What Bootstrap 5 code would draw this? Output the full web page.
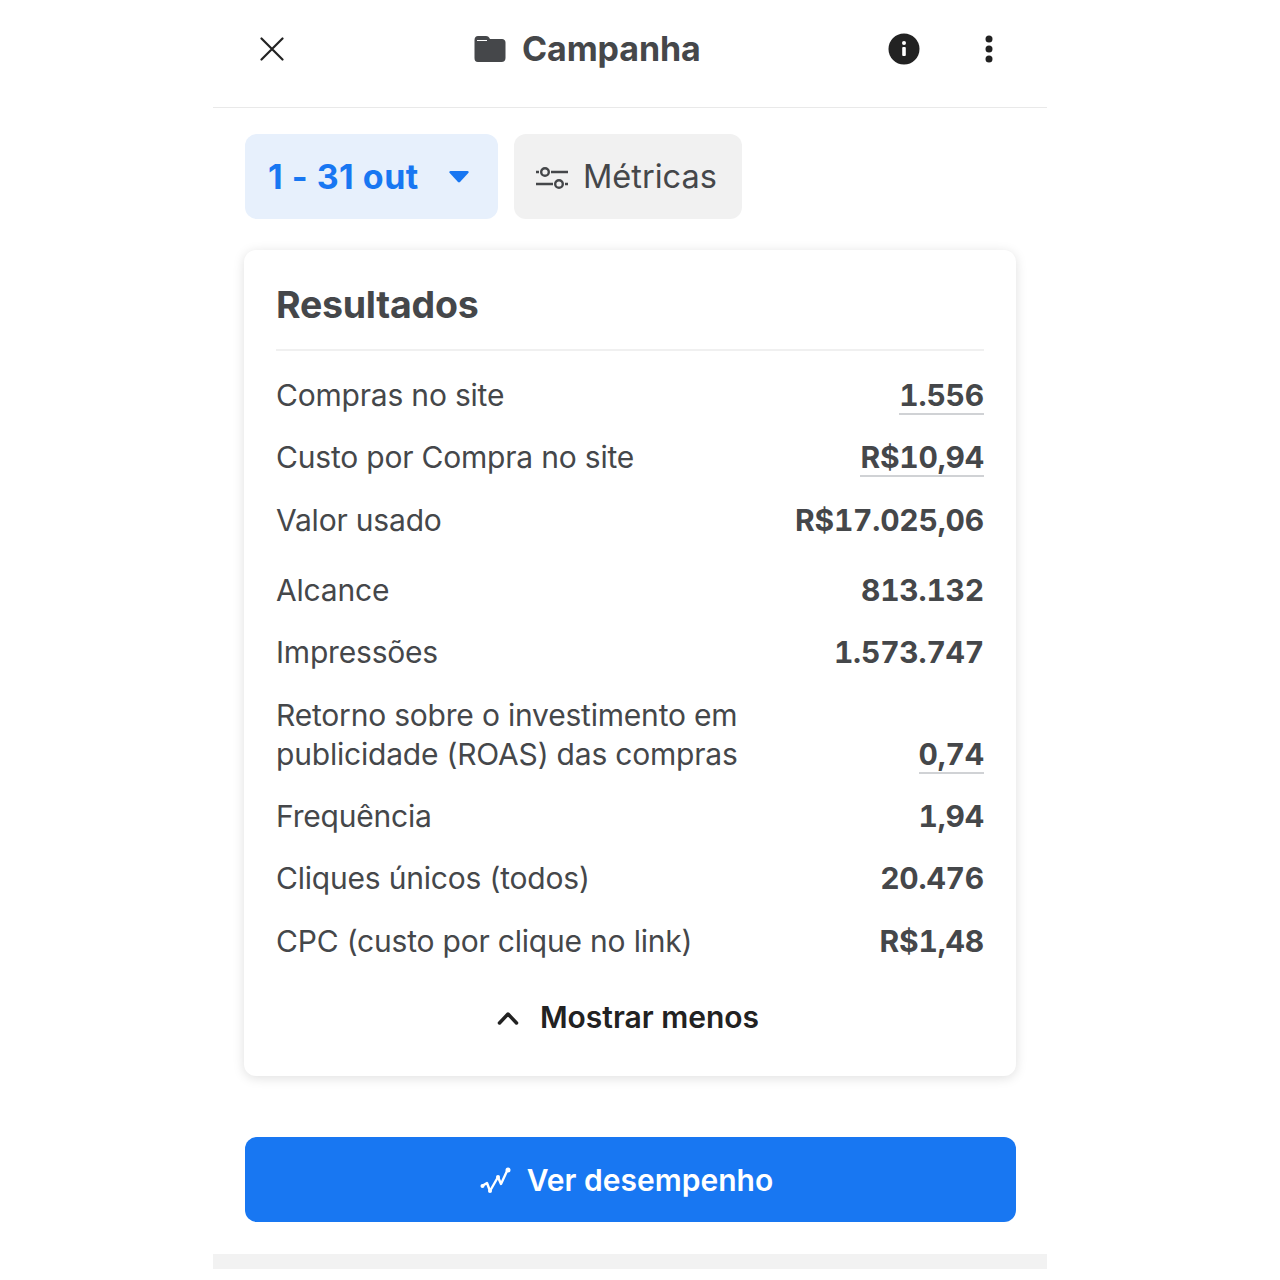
<!DOCTYPE html>
<html lang="pt-BR">
<head>
    <meta charset="UTF-8">
    <meta name="viewport" content="width=device-width, initial-scale=1.0">
    <title>Campanha</title>
    <link rel="stylesheet" href="https://cdn.jsdelivr.net/npm/bootstrap@5.3.2/dist/css/bootstrap.min.css">
    <style>
        body { background: #fff; font-family: Inter, "Liberation Sans", sans-serif; color: #45474a; }
        .phone-view { width: 834px; margin-left: 213px; }
        .top-bar { height: 108px; border-bottom: 1px solid #e9e9e9; padding: 0 53px 10px 47px; color: #222; }
        .top-title { font-size: 34px; font-weight: 700; color: #45474a; gap: 16px; letter-spacing: -.1px; }
        .close-box { width: 214px; }
        .top-actions { width: 106px; margin-left: auto; }
        .filter-row { padding: 26px 32px 0; gap: 16px; }
        .filter-btn { height: 85px; border-radius: 12px; border: 0; font-size: 32px; display: flex; align-items: center; }
        .filter-date { width: 253px; background: #e7f0fc; color: #1877f2; font-size: 34px; font-weight: 700; padding: 0 29px 0 23px; justify-content: space-between; letter-spacing: .5px; }
        .filter-metric { width: 228px; background: #f1f1f1; color: #45474a; padding: 2px 23px 0 22px; gap: 15px; font-size: 32.500px; }
        .result-card { margin: 31px 31px 0; border: 0; border-radius: 12px; height: 826px; padding: 0 32px; box-shadow: 0 2px 12px rgba(0,0,0,.13); }
        .result-title { font-size: 37.500px; font-weight: 700; color: #45474a; height: 101px; line-height: 110px; border-bottom: 2px solid #f0f0f0; letter-spacing: -.25px; }
        .metric-list { padding-top: 13px; }
        .metric-row { height: 62.500px; font-size: 30px; align-items: center; letter-spacing: -.2px; }
        .metric-row.gap-top { margin-top: 7.500px; }
        .metric-row.tall { height: 100.800px; align-items: flex-end; padding-bottom: 11px; line-height: 39px; }
        .metric-num { font-weight: 700; white-space: nowrap; font-variant-numeric: tabular-nums; letter-spacing: -.2px; }
        .metric-link { border-bottom: 2px solid #d0d2d5; line-height: 35px; padding-top: 2px; }
        .show-less { margin-top: 23px; padding-right: 4px; font-size: 30px; font-weight: 600; color: #222; gap: 21px; }
        .perf-btn { margin: 61px 32px 0 32px; width: 771px; height: 85px; padding: 2px 8px 0 0; background: #1877f2; border: 0; border-radius: 12px; color: #fff; font-size: 30px; font-weight: 600; gap: 15px; }
        .perf-btn:hover { background: #1877f2; color: #fff; }
        .bottom-band { height: 15px; margin-top: 32px; background: #f2f2f2; }
    </style>
</head>
<body>
    <div class="phone-view">
        <div class="top-bar d-flex align-items-center">
            <div class="close-box">
                <svg width="24" height="24" viewBox="0 0 24 24" fill="none" stroke="#222" stroke-width="2.200" stroke-linecap="round" class="d-block"><path d="M1.500 1.500 22.500 22.500M22.500 1.500 1.500 22.500"/></svg>
            </div>
            <div class="top-title d-flex align-items-center">
                <svg width="32" height="28" viewBox="0 0 32 28"><path fill="#45474a" d="M4 1h8c2 0 3 1 4 3h12c2 0 3.500 1.500 3.500 3.500V23c0 2.500-1.500 4-4 4H4c-2.500 0-3.500-1.500-3.500-4V5C.5 2.500 2 1 4 1z"/><path d="M3 5.500h10" stroke="#fff" stroke-width="1" fill="none"/></svg>
                <span>Campanha</span>
            </div>
            <div class="top-actions d-flex align-items-center justify-content-between">
                <svg width="32" height="32" viewBox="0 0 32 32"><circle cx="16" cy="16" r="15.500" fill="#222"/><circle cx="16" cy="10" r="2" fill="#fff"/><rect x="14.200" y="14" width="3.600" height="9" rx="1" fill="#fff"/></svg>
                <svg width="10" height="28" viewBox="0 0 10 28" fill="#222"><circle cx="5" cy="4" r="3.500"/><circle cx="5" cy="14" r="3.500"/><circle cx="5" cy="24" r="3.500"/></svg>
            </div>
        </div>

        <div class="filter-row d-flex">
            <button class="filter-btn filter-date">
                <span>1 - 31 out</span>
                <svg width="20" height="12" viewBox="0 0 20 12"><path fill="#1877f2" d="M1.500 0h17c1 0 1.500 1 1 1.800L11 11c-.6.600-1.400.600-2 0L.5 1.800C0 1 .5 0 1.500 0z"/></svg>
            </button>
            <button class="filter-btn filter-metric">
                <svg width="32" height="24" viewBox="0 0 32 24" fill="none" stroke="#45474a" stroke-width="2.400"><path d="M0 6h3M15 6h17M0 18h17M29 18h3"/><circle cx="9" cy="6" r="3.800"/><circle cx="23" cy="18" r="3.800"/></svg>
                <span>Métricas</span>
            </button>
        </div>

        <div class="card result-card">
            <div class="result-title">Resultados</div>
            <div class="metric-list">
                <div class="metric-row d-flex justify-content-between"><span>Compras no site</span><span class="metric-num metric-link">1.556</span></div>
                <div class="metric-row d-flex justify-content-between"><span>Custo por Compra no site</span><span class="metric-num metric-link">R$10,94</span></div>
                <div class="metric-row d-flex justify-content-between"><span>Valor usado</span><span class="metric-num">R$17.025,06</span></div>
                <div class="metric-row gap-top d-flex justify-content-between"><span>Alcance</span><span class="metric-num">813.132</span></div>
                <div class="metric-row d-flex justify-content-between"><span>Impressões</span><span class="metric-num">1.573.747</span></div>
                <div class="metric-row tall d-flex justify-content-between"><span>Retorno sobre o investimento em<br>publicidade (ROAS) das compras</span><span class="metric-num metric-link">0,74</span></div>
                <div class="metric-row d-flex justify-content-between"><span>Frequência</span><span class="metric-num">1,94</span></div>
                <div class="metric-row d-flex justify-content-between"><span>Cliques únicos (todos)</span><span class="metric-num">20.476</span></div>
                <div class="metric-row d-flex justify-content-between"><span>CPC (custo por clique no link)</span><span class="metric-num">R$1,48</span></div>
            </div>
            <div class="show-less d-flex align-items-center justify-content-center">
                <svg width="22" height="14" viewBox="0 0 22 14" fill="none" stroke="#222" stroke-width="3.500" stroke-linecap="round" stroke-linejoin="round"><path d="M2.500 12 11 3l8.500 9"/></svg>
                <span>Mostrar menos</span>
            </div>
        </div>

        <button class="btn perf-btn d-flex align-items-center justify-content-center">
            <svg width="32" height="28" viewBox="0 0 32 28" fill="none" stroke="#fff" stroke-width="2.400" stroke-linecap="round" stroke-linejoin="round"><path d="M2 19l5-3 3 8 8-14 3 7 6-13"/><circle cx="2.500" cy="19" r="2" fill="#fff" stroke="none"/><circle cx="10" cy="24" r="2" fill="#fff" stroke="none"/><circle cx="18" cy="10" r="2" fill="#fff" stroke="none"/><circle cx="28" cy="3" r="2.500" fill="#fff" stroke="none"/></svg>
            <span>Ver desempenho</span>
        </button>
        <div class="bottom-band"></div>
    </div>
    <script src="https://cdn.jsdelivr.net/npm/bootstrap@5.3.2/dist/js/bootstrap.bundle.min.js"></script>
</body>
</html>
